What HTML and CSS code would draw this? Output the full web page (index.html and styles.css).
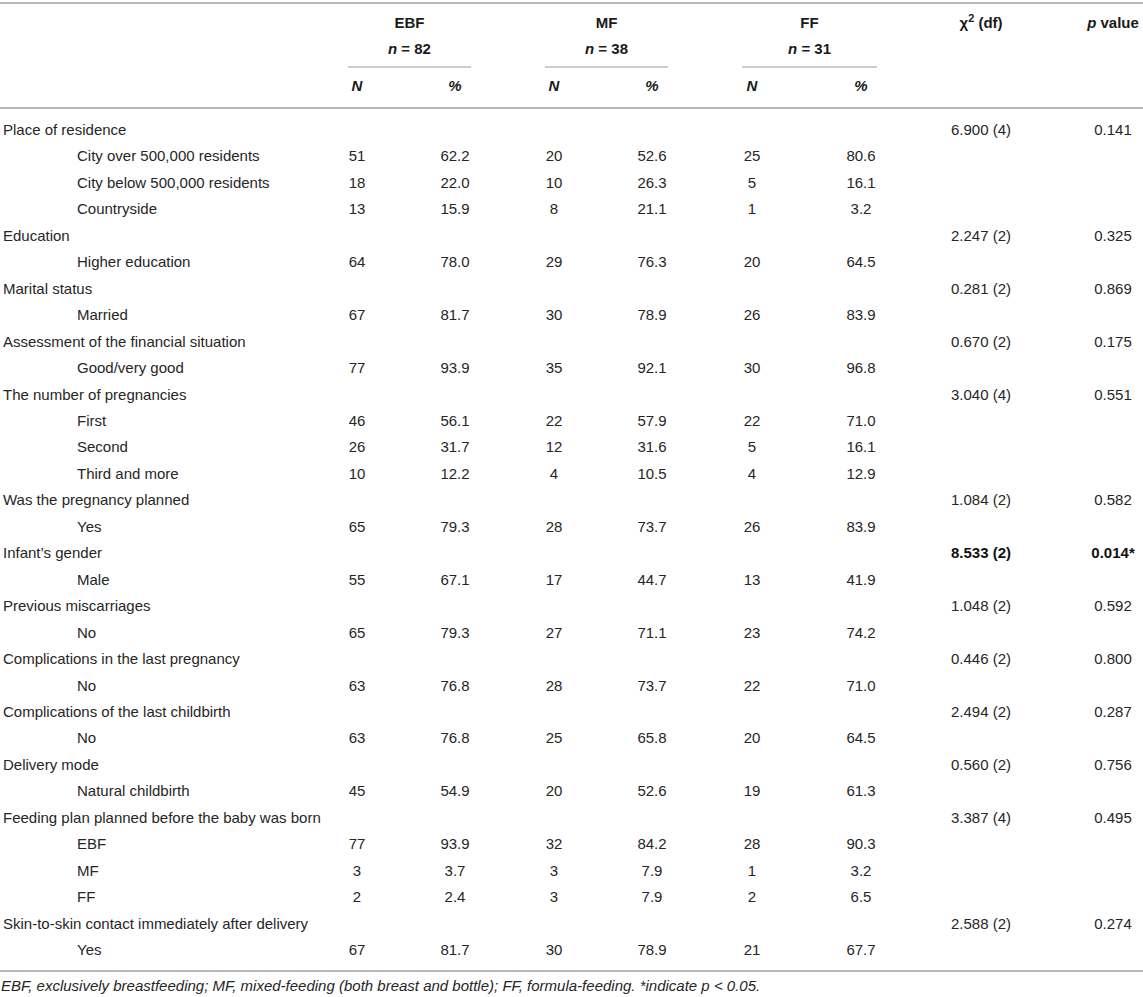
FILE: index.html
```html
<!DOCTYPE html>
<html lang="en">
<head>
<meta charset="utf-8">
<title>Table</title>
<link rel="stylesheet" href="styles.css">
</head>
<body>
<div class="wrap">
<table class="tbl">
  <colgroup>
    <col class="c-label"><col class="c-n1"><col class="c-p1"><col class="c-n2"><col class="c-p2"><col class="c-n3"><col class="c-p3"><col class="c-chi"><col class="c-pv">
  </colgroup>
  <thead>
    <tr class="h1">
      <th></th>
      <th colspan="2"><div class="g g1">EBF</div></th>
      <th colspan="2"><div class="g g2">MF</div></th>
      <th colspan="2"><div class="g g3">FF</div></th>
      <th rowspan="3" class="chi">χ<sup>2</sup> (df)</th>
      <th rowspan="3" class="pv"><i>p</i> value</th>
    </tr>
    <tr class="h2">
      <th></th>
      <th colspan="2"><div class="g g1 ul"><i>n</i> = 82</div></th>
      <th colspan="2"><div class="g g2 ul"><i>n</i> = 38</div></th>
      <th colspan="2"><div class="g g3 ul"><i>n</i> = 31</div></th>
    </tr>
    <tr class="h3">
      <th></th>
      <th><i>N</i></th><th><i>%</i></th>
      <th><i>N</i></th><th><i>%</i></th>
      <th><i>N</i></th><th><i>%</i></th>
    </tr>
  </thead>
  <tbody>
    <tr class="first"><td class="cat" colspan="7">Place of residence</td><td class="chi">6.900 (4)</td><td class="pv">0.141</td></tr>
    <tr><td class="sub">City over 500,000 residents</td><td>51</td><td>62.2</td><td>20</td><td>52.6</td><td>25</td><td>80.6</td><td></td><td></td></tr>
    <tr><td class="sub">City below 500,000 residents</td><td>18</td><td>22.0</td><td>10</td><td>26.3</td><td>5</td><td>16.1</td><td></td><td></td></tr>
    <tr><td class="sub">Countryside</td><td>13</td><td>15.9</td><td>8</td><td>21.1</td><td>1</td><td>3.2</td><td></td><td></td></tr>
    <tr><td class="cat" colspan="7">Education</td><td class="chi">2.247 (2)</td><td class="pv">0.325</td></tr>
    <tr><td class="sub">Higher education</td><td>64</td><td>78.0</td><td>29</td><td>76.3</td><td>20</td><td>64.5</td><td></td><td></td></tr>
    <tr><td class="cat" colspan="7">Marital status</td><td class="chi">0.281 (2)</td><td class="pv">0.869</td></tr>
    <tr><td class="sub">Married</td><td>67</td><td>81.7</td><td>30</td><td>78.9</td><td>26</td><td>83.9</td><td></td><td></td></tr>
    <tr><td class="cat" colspan="7">Assessment of the financial situation</td><td class="chi">0.670 (2)</td><td class="pv">0.175</td></tr>
    <tr><td class="sub">Good/very good</td><td>77</td><td>93.9</td><td>35</td><td>92.1</td><td>30</td><td>96.8</td><td></td><td></td></tr>
    <tr><td class="cat" colspan="7">The number of pregnancies</td><td class="chi">3.040 (4)</td><td class="pv">0.551</td></tr>
    <tr><td class="sub">First</td><td>46</td><td>56.1</td><td>22</td><td>57.9</td><td>22</td><td>71.0</td><td></td><td></td></tr>
    <tr><td class="sub">Second</td><td>26</td><td>31.7</td><td>12</td><td>31.6</td><td>5</td><td>16.1</td><td></td><td></td></tr>
    <tr><td class="sub">Third and more</td><td>10</td><td>12.2</td><td>4</td><td>10.5</td><td>4</td><td>12.9</td><td></td><td></td></tr>
    <tr><td class="cat" colspan="7">Was the pregnancy planned</td><td class="chi">1.084 (2)</td><td class="pv">0.582</td></tr>
    <tr><td class="sub">Yes</td><td>65</td><td>79.3</td><td>28</td><td>73.7</td><td>26</td><td>83.9</td><td></td><td></td></tr>
    <tr><td class="cat" colspan="7">Infant’s gender</td><td class="chi b">8.533 (2)</td><td class="pv b">0.014*</td></tr>
    <tr><td class="sub">Male</td><td>55</td><td>67.1</td><td>17</td><td>44.7</td><td>13</td><td>41.9</td><td></td><td></td></tr>
    <tr><td class="cat" colspan="7">Previous miscarriages</td><td class="chi">1.048 (2)</td><td class="pv">0.592</td></tr>
    <tr><td class="sub">No</td><td>65</td><td>79.3</td><td>27</td><td>71.1</td><td>23</td><td>74.2</td><td></td><td></td></tr>
    <tr><td class="cat" colspan="7">Complications in the last pregnancy</td><td class="chi">0.446 (2)</td><td class="pv">0.800</td></tr>
    <tr><td class="sub">No</td><td>63</td><td>76.8</td><td>28</td><td>73.7</td><td>22</td><td>71.0</td><td></td><td></td></tr>
    <tr><td class="cat" colspan="7">Complications of the last childbirth</td><td class="chi">2.494 (2)</td><td class="pv">0.287</td></tr>
    <tr><td class="sub">No</td><td>63</td><td>76.8</td><td>25</td><td>65.8</td><td>20</td><td>64.5</td><td></td><td></td></tr>
    <tr><td class="cat" colspan="7">Delivery mode</td><td class="chi">0.560 (2)</td><td class="pv">0.756</td></tr>
    <tr><td class="sub">Natural childbirth</td><td>45</td><td>54.9</td><td>20</td><td>52.6</td><td>19</td><td>61.3</td><td></td><td></td></tr>
    <tr><td class="cat" colspan="7">Feeding plan planned before the baby was born</td><td class="chi">3.387 (4)</td><td class="pv">0.495</td></tr>
    <tr><td class="sub">EBF</td><td>77</td><td>93.9</td><td>32</td><td>84.2</td><td>28</td><td>90.3</td><td></td><td></td></tr>
    <tr><td class="sub">MF</td><td>3</td><td>3.7</td><td>3</td><td>7.9</td><td>1</td><td>3.2</td><td></td><td></td></tr>
    <tr><td class="sub">FF</td><td>2</td><td>2.4</td><td>3</td><td>7.9</td><td>2</td><td>6.5</td><td></td><td></td></tr>
    <tr><td class="cat" colspan="7">Skin-to-skin contact immediately after delivery</td><td class="chi">2.588 (2)</td><td class="pv">0.274</td></tr>
    <tr class="last"><td class="sub">Yes</td><td>67</td><td>81.7</td><td>30</td><td>78.9</td><td>21</td><td>67.7</td><td></td><td></td></tr>
  </tbody>
</table>
<p class="note">EBF, exclusively breastfeeding; MF, mixed-feeding (both breast and bottle); FF, formula-feeding. *indicate p &lt; 0.05.</p>
</div>
</body>
</html>
```

FILE: styles.css
```css
html, body {
  margin: 0;
  padding: 0;
  background: #ffffff;
}

body {
  font-family: "Liberation Sans", Arial, Helvetica, sans-serif;
  color: #262626;
}

.wrap {
  padding-top: 2px;
  width: 1143px;
}

.tbl {
  width: 1143px;
  border-collapse: collapse;
  table-layout: fixed;
  font-size: 15px;
  border-top: 2px solid #b8b8b8;
  border-bottom: 2px solid #b8b8b8;
}

.c-label { width: 306px; }
.c-n1 { width: 102px; }
.c-p1 { width: 94px; }
.c-n2 { width: 104px; }
.c-p2 { width: 92px; }
.c-n3 { width: 108px; }
.c-p3 { width: 110px; }
.c-chi { width: 130px; }
.c-pv { width: 97px; }

.tbl th {
  font-weight: bold;
  color: #1a1a1a;
  text-align: center;
  line-height: 26px;
  padding: 0;
  vertical-align: top;
}

.tbl th i {
  font-style: italic;
}

.tbl sup {
  font-size: 11px;
  line-height: 0;
  vertical-align: 6px;
}

.h1 th {
  padding-top: 6px;
}

.h3 th {
  padding-top: 5px;
  padding-bottom: 8px;
}

.tbl thead tr.h3 {
  border-bottom: 2px solid #b8b8b8;
}

.tbl thead th.chi,
.tbl thead th.pv {
  padding-top: 6px;
}

.g {
  text-align: center;
}

.g1 { margin: 0 31px 0 42px; }
.g2 { margin: 0 30px 0 43px; }
.g3 { margin: 0 39px 0 44px; }

.ul {
  border-bottom: 2px solid #cdcdcd;
  padding-bottom: 4px;
}

.tbl td {
  padding: 0;
  line-height: 26.45px;
  text-align: center;
  white-space: nowrap;
}

.tbl td.cat {
  text-align: left;
  padding-left: 3px;
}

.tbl td.sub {
  text-align: left;
  padding-left: 77px;
}

.tbl td.pv,
.tbl th.pv {
  padding-left: 37px;
}

.tbl td.b {
  font-weight: bold;
  color: #111111;
}

.tbl tr.first td {
  padding-top: 8px;
}

.tbl tr.last td {
  padding-bottom: 6px;
}

.note {
  margin: 5px 0 0 1px;
  font-size: 15px;
  line-height: 18px;
  font-style: italic;
  color: #262626;
}
```
